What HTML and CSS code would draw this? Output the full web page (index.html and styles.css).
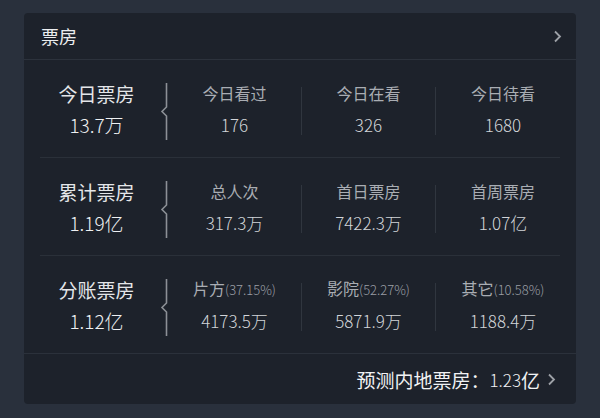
FILE: index.html
```html
<!DOCTYPE html>
<html lang="zh-CN">
<head>
    <meta charset="UTF-8">
    <title>票房</title>
    <link rel="stylesheet" href="styles.css">
</head>
<body>

<div class="card">
    <div class="card-head">
        <span class="title">票房</span>
        <svg class="arrow" width="9" height="13" viewBox="0 0 9 13"><path d="M2 1.5 L7 6.5 L2 11.5" fill="none" stroke="#9da1a7" stroke-width="1.8"/></svg>
    </div>

    <div class="row">
        <div class="main">
            <div class="main-name">今日票房</div>
            <div class="main-val">13.7万</div>
        </div>
        <svg class="brace" width="8" height="57" viewBox="0 0 8 57"><path d="M6.5 0 V24 L2 28.5 L6.5 33 V57" fill="none" stroke="#8c9096" stroke-width="1.6"/></svg>
        <div class="stat"><div class="stat-name">今日看过</div><div class="stat-val">176</div></div>
        <span class="divider"></span>
        <div class="stat"><div class="stat-name">今日在看</div><div class="stat-val">326</div></div>
        <span class="divider"></span>
        <div class="stat"><div class="stat-name">今日待看</div><div class="stat-val">1680</div></div>
    </div>

    <div class="row">
        <div class="main">
            <div class="main-name">累计票房</div>
            <div class="main-val">1.19亿</div>
        </div>
        <svg class="brace" width="8" height="57" viewBox="0 0 8 57"><path d="M6.5 0 V24 L2 28.5 L6.5 33 V57" fill="none" stroke="#8c9096" stroke-width="1.6"/></svg>
        <div class="stat"><div class="stat-name">总人次</div><div class="stat-val">317.3万</div></div>
        <span class="divider"></span>
        <div class="stat"><div class="stat-name">首日票房</div><div class="stat-val">7422.3万</div></div>
        <span class="divider"></span>
        <div class="stat"><div class="stat-name">首周票房</div><div class="stat-val">1.07亿</div></div>
    </div>

    <div class="row last">
        <div class="main">
            <div class="main-name">分账票房</div>
            <div class="main-val">1.12亿</div>
        </div>
        <svg class="brace" width="8" height="57" viewBox="0 0 8 57"><path d="M6.5 0 V24 L2 28.5 L6.5 33 V57" fill="none" stroke="#8c9096" stroke-width="1.6"/></svg>
        <div class="stat"><div class="stat-name">片方<small>(37.15%)</small></div><div class="stat-val">4173.5万</div></div>
        <span class="divider"></span>
        <div class="stat"><div class="stat-name">影院<small>(52.27%)</small></div><div class="stat-val">5871.9万</div></div>
        <span class="divider"></span>
        <div class="stat"><div class="stat-name">其它<small>(10.58%)</small></div><div class="stat-val">1188.4万</div></div>
    </div>

    <div class="card-foot">
        <span class="foot-label">预测内地票房：</span>
        <span class="foot-num">1.23</span><span class="foot-unit">亿</span>
        <svg class="arrow foot-arrow" width="9" height="13" viewBox="0 0 9 13"><path d="M2 1.5 L7 6.5 L2 11.5" fill="none" stroke="#9da1a7" stroke-width="1.8"/></svg>
    </div>
</div>

</body>
</html>
```

FILE: styles.css
```css
html, body, div, span {
    margin: 0;
    padding: 0;
}
body {
    background-color: #29303c;
    font-family: "Noto Sans CJK SC", "Noto Sans", sans-serif;
    width: 600px;
    height: 418px;
    overflow: hidden;
}
.card {
    margin: 13px 0 0 24px;
    width: 552px;
    height: 391px;
    background-color: #1d222b;
    border-radius: 4px;
}
.card-head {
    height: 46px;
    border-bottom: 1px solid #2c323c;
    display: flex;
    align-items: center;
    justify-content: space-between;
    padding: 0 14px 0 17px;
}
.title {
    font-size: 18px;
    color: #eceef0;
    line-height: 46px;
}
.arrow {
    display: block;
}
.row {
    margin: 0 16px;
    height: 97px;
    border-bottom: 1px solid #2a3039;
    display: grid;
    grid-template-columns: 113px 15px 133px 1px 133px 1px 134px;
    align-items: center;
}
.row.last {
    border-bottom: none;
}
.main, .stat {
    text-align: center;
    white-space: nowrap;
}
.main-name {
    font-size: 19px;
    line-height: 31px;
    color: #e4e6e9;
}
.main-val {
    font-size: 19px;
    line-height: 31px;
    font-weight: 300;
    color: #eef0f2;
}
.brace {
    justify-self: end;
    margin-top: 6px;
}
.stat-name {
    font-size: 16px;
    line-height: 31px;
    color: #a9adb3;
}
.stat-name small {
    font-size: 13px;
    font-weight: 300;
    color: #9a9ea5;
}
.stat-val {
    font-size: 17px;
    line-height: 31px;
    font-weight: 300;
    color: #d2d5d9;
}
.divider {
    width: 1px;
    height: 48px;
    margin-top: 4px;
    background-color: #30363f;
}
.card-foot {
    border-top: 1px solid #2b313b;
    height: 51px;
    display: flex;
    align-items: center;
    justify-content: flex-end;
    padding-right: 20px;
    color: #f1f2f4;
}
.foot-label {
    font-size: 19px;
}
.foot-num {
    font-size: 17px;
    font-weight: 300;
}
.foot-unit {
    font-size: 19px;
}
.foot-arrow {
    margin-left: 7px;
}
```
